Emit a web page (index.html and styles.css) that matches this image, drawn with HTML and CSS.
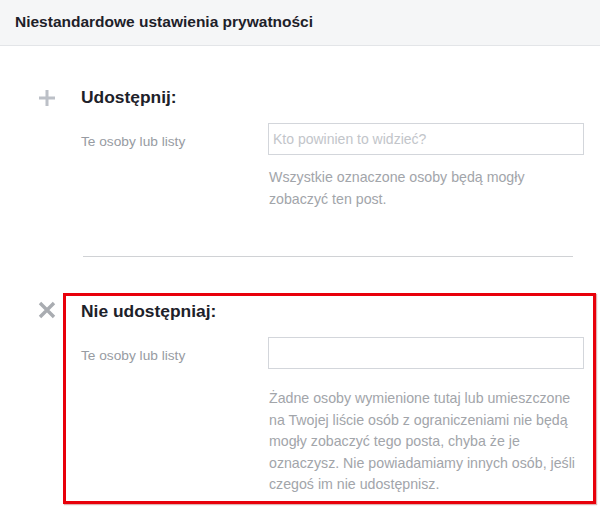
FILE: index.html
```html
<!DOCTYPE html>
<html lang="pl">
<head>
<meta charset="utf-8">
<title>Niestandardowe ustawienia prywatności</title>
<link rel="stylesheet" href="styles.css">
</head>
<body>
<header class="header">
  <h1 class="header-title">Niestandardowe ustawienia prywatności</h1>
</header>
<main class="main">
  <section class="section">
    <div class="icon">
      <svg width="18" height="18" viewBox="0 0 18 18"><path d="M9 1v16M1 9h16" stroke="#bcc0c7" stroke-width="3" fill="none"/></svg>
    </div>
    <div class="box">
      <h2 class="title">Udostępnij:</h2>
      <div class="row">
        <span class="label">Te osoby lub listy</span>
        <input class="field" type="text" placeholder="Kto powinien to widzieć?">
      </div>
      <p class="help">Wszystkie oznaczone osoby będą mogły zobaczyć ten post.</p>
    </div>
  </section>
  <hr class="divider">
  <section class="section">
    <div class="icon icon-x">
      <svg width="18" height="18" viewBox="0 0 18 18"><path d="M2 2l14 14M16 2L2 16" stroke="#a9acb1" stroke-width="3.4" fill="none"/></svg>
    </div>
    <div class="box box-marked">
      <h2 class="title">Nie udostępniaj:</h2>
      <div class="row">
        <span class="label">Te osoby lub listy</span>
        <input class="field" type="text">
      </div>
      <p class="help help-long">Żadne osoby wymienione tutaj lub umieszczone na Twojej liście osób z ograniczeniami nie będą mogły zobaczyć tego posta, chyba że je oznaczysz. Nie powiadamiamy innych osób, jeśli czegoś im nie udostępnisz.</p>
    </div>
  </section>
</main>
</body>
</html>
```

FILE: styles.css
```css
* { box-sizing: border-box; }
html, body { margin: 0; padding: 0; background: #fff; }
body {
  font-family: "Liberation Sans", Arial, Helvetica, sans-serif;
  color: #1d2129;
  width: 600px;
  height: 512px;
  overflow: hidden;
}
.header {
  height: 46px;
  background: #f5f6f7;
  border-bottom: 1px solid #e3e5e8;
  padding: 0 15px;
  display: flex;
  align-items: center;
}
.header-title {
  margin: 0;
  font-size: 15.5px;
  font-weight: bold;
  color: #1d2129;
  line-height: 20px;
  padding-bottom: 2px;
}
.main {
  padding: 33px 4px 0 38px;
}
.section {
  display: flex;
}
.icon {
  width: 25px;
  flex: none;
  padding-top: 10px;
}
.icon svg { display: block; }
.icon-x { padding-top: 8px; }
.box {
  flex: 1;
  border: 3px solid transparent;
  padding: 5px 9px 5px 15px;
}
.box-marked {
  border-color: #e8000a;
  box-shadow: 1px 1px 1px rgba(150, 0, 0, 0.3);
}
.title {
  margin: 0;
  font-size: 17.4px;
  font-weight: bold;
  line-height: 20px;
  color: #1d2129;
}
.row {
  display: grid;
  grid-template-columns: 187px 1fr;
  align-items: center;
  margin-top: 16px;
}
.label {
  font-size: 13.7px;
  color: #979ba2;
  line-height: 20px;
  padding-top: 6px;
}
.field {
  height: 32px;
  width: 100%;
  border: 1px solid #d3d6db;
  padding: 0 4px;
  font-family: inherit;
  font-size: 14px;
  color: #1d2129;
  outline: none;
  background: #fff;
}
.field::placeholder { color: #c2c5ca; }
.help {
  margin: 12px 0 0 188px;
  font-size: 14.2px;
  line-height: 21.5px;
  color: #a2a5aa;
}
.help-long { margin-top: 19px; }
.divider {
  border: 0;
  border-top: 1px solid #d0d2d5;
  margin: 38px 23px 36px 45px;
}
```
